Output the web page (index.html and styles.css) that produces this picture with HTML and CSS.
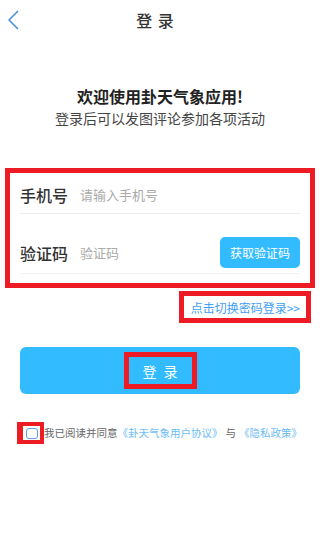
FILE: index.html
```html
<!DOCTYPE html>
<html lang="zh">
<head>
<meta charset="utf-8">
<link rel="stylesheet" href="styles.css">
</head>
<body>
<div class="page">
  <header class="topbar">
    <span class="back">
      <svg width="12" height="20" viewBox="0 0 12 20"><path d="M10.5 1.5 L2 10 L10.5 18.5" fill="none" stroke="#4a90e2" stroke-width="1.6" stroke-linecap="round" stroke-linejoin="round"/></svg>
    </span>
    <h1 class="title">登 录</h1>
  </header>

  <section class="welcome">
    <p class="welcome-main">欢迎使用卦天气象应用!</p>
    <p class="welcome-sub">登录后可以发图评论参加各项活动</p>
  </section>

  <div class="form">
    <div class="row row-phone">
      <span class="label">手机号</span>
      <span class="placeholder">请输入手机号</span>
    </div>
    <div class="row row-code">
      <span class="label">验证码</span>
      <span class="placeholder">验证码</span>
      <span class="code-btn">获取验证码</span>
    </div>
  </div>

  <div class="switch-wrap">
    <span class="switch">点击切换密码登录&gt;&gt;</span>
  </div>

  <div class="login-btn"><span class="login-text">登 录</span></div>

  <div class="agree">
    <span class="check-box"><span class="check"></span></span>
    <span class="agree-text">我已阅读并同意<span class="link">《卦天气象用户协议》</span><span class="and">与</span><span class="link">《隐私政策》</span></span>
  </div>
</div>
</body>
</html>
```

FILE: styles.css
```css
* { box-sizing: border-box; }
html, body { margin: 0; padding: 0; background: #fff; }
body {
  font-family: "Noto Sans CJK SC", "Noto Sans", sans-serif;
  color: #333;
  width: 320px;
  height: 550px;
  overflow: hidden;
}
p { margin: 0; }

.topbar {
  height: 40px;
  display: flex;
  align-items: center;
  justify-content: center;
  position: relative;
}
.back {
  position: absolute;
  left: 7px;
  top: 10px;
  display: flex;
}
.title {
  margin: 0 0 0 -9px;
  font-size: 16px;
  font-weight: 500;
  color: #333;
  line-height: 20px;
  letter-spacing: 1px;
}

.welcome {
  margin-top: 45px;
  text-align: center;
}
.welcome-main {
  font-size: 16px;
  font-weight: 700;
  color: #222;
  line-height: 22px;
}
.welcome-sub {
  font-size: 14px;
  color: #444;
  line-height: 20px;
  margin-top: 1px;
}

.form {
  margin: 40px 5px 0;
  border: 5px solid #ed1c24;
  padding: 0 10px 9px;
}
.row {
  display: flex;
  align-items: center;
  border-bottom: 1px solid #ececec;
}
.row-phone {
  height: 41px;
  padding-top: 4px;
}
.row-code {
  height: 60px;
  padding-top: 23px;
  padding-bottom: 5px;
  border-bottom-color: #f3f3f3;
}
.label {
  font-size: 16px;
  font-weight: 500;
  color: #333;
  width: 60px;
  line-height: 22px;
}
.placeholder {
  font-size: 13px;
  color: #aaa;
  line-height: 18px;
  flex: 1;
}
.code-btn {
  width: 80px;
  height: 31px;
  border-radius: 5px;
  background: #33bbff;
  color: #fff;
  font-size: 12px;
  display: flex;
  align-items: center;
  justify-content: center;
}

.switch-wrap {
  display: flex;
  justify-content: flex-end;
  padding-right: 9px;
  margin-top: 3px;
}
.switch {
  border: 5px solid #ed1c24;
  height: 32px;
  padding: 0 6px 0 7px;
  display: flex;
  align-items: center;
  font-size: 12px;
  color: #3f9ef5;
}

.login-btn {
  margin: 24px 20px 0;
  height: 47px;
  border-radius: 6px;
  background: #33bbff;
  display: flex;
  align-items: center;
  justify-content: center;
}
.login-text {
  width: 73px;
  height: 37px;
  border: 5px solid #ed1c24;
  display: flex;
  align-items: center;
  justify-content: center;
  color: #fff;
  font-size: 14px;
  letter-spacing: 2px;
  padding-left: 2px;
}

.agree {
  margin-top: 28px;
  padding-left: 17px;
  display: flex;
  align-items: center;
}
.check-box {
  width: 27px;
  height: 22px;
  border: 4px solid #ed1c24;
  border-left-width: 6px;
  display: flex;
  align-items: center;
  justify-content: center;
  flex-shrink: 0;
}
.check {
  width: 12px;
  height: 11px;
  border: 1.5px solid #5a9ef5;
  border-radius: 3px;
  background: #fff;
  flex-shrink: 0;
}
.agree-text {
  font-size: 10.5px;
  color: #666;
  line-height: 14px;
  white-space: nowrap;
}
.link { color: #6cbcf5; }
.and { margin: 0 3px; }
```
